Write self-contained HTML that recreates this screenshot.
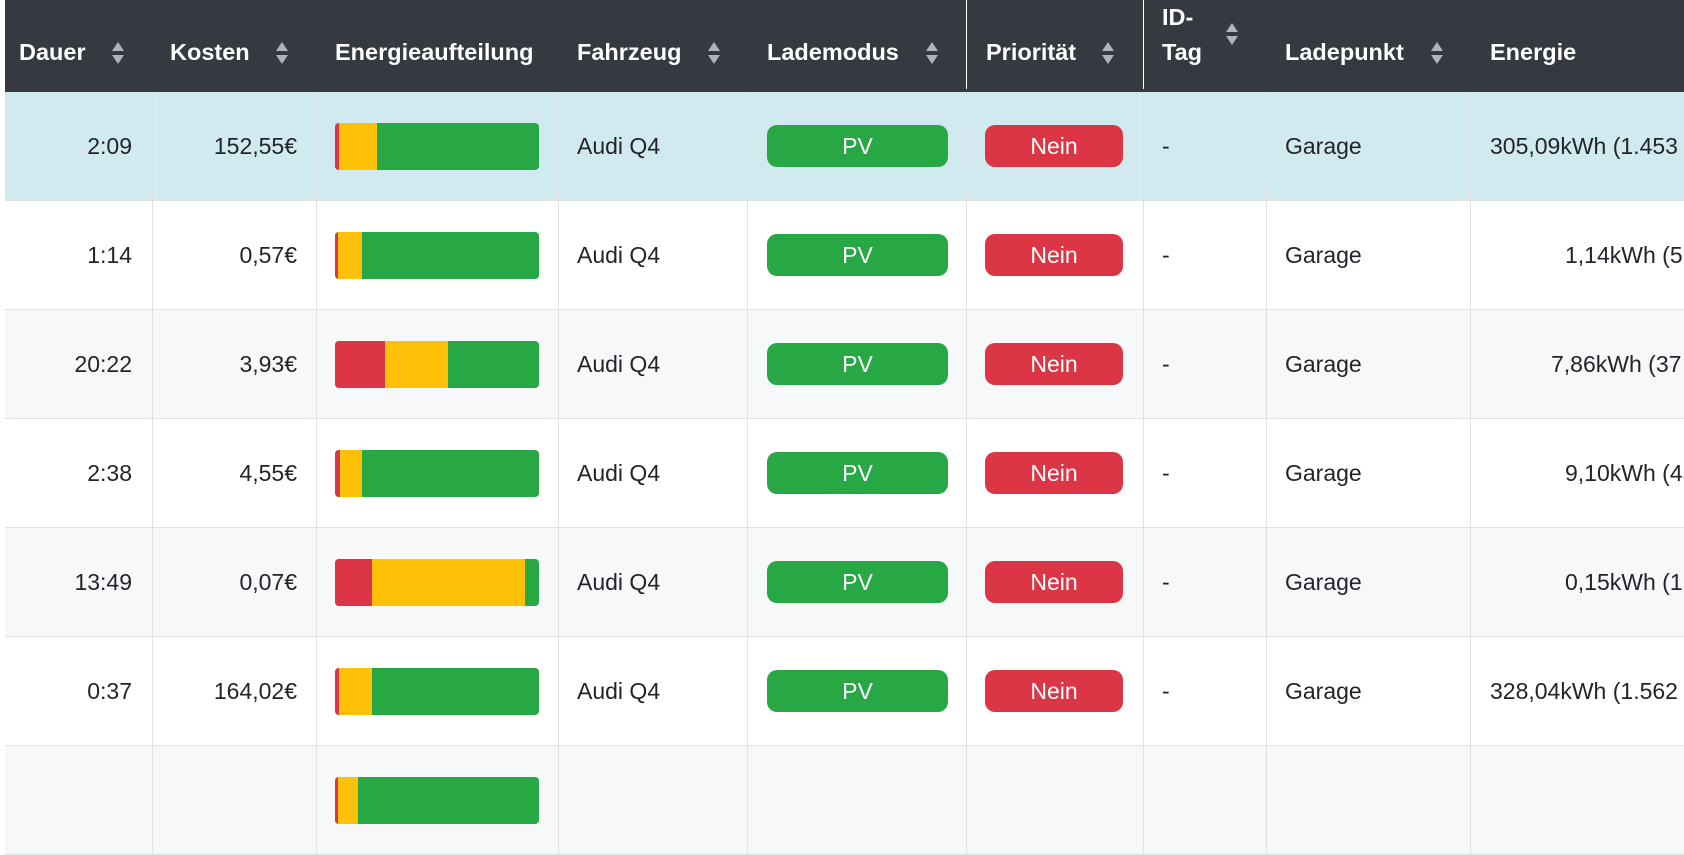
<!DOCTYPE html>
<html><head><meta charset="utf-8"><style>
*{margin:0;padding:0;box-sizing:border-box}
body{width:1684px;height:777px;overflow:hidden;background:#fff;font-family:"Liberation Sans",Arial,sans-serif;position:relative}
.hd{position:absolute;left:5px;top:0;width:1679px;height:92px;background:#343a40;color:#fff;font-weight:bold;font-size:23.5px}
.hd span{position:absolute;top:39px}
.vl{position:absolute;top:0;width:1px;height:89px;background:#fff}
.row{position:absolute;left:5px;width:1679px;height:109px;border-bottom:1px solid #dee2e6;font-size:23px;color:#212529}
.row .c{position:absolute;top:0;height:109px;border-left:1px solid #dee2e6}
.row .t{position:absolute;top:41px;white-space:nowrap}
.bar{position:absolute;left:330px;top:31px;width:204px;height:47px;border-radius:4px;overflow:hidden;display:flex;background:#28a745}
.bar i{display:block;height:100%}
.pv,.nn{position:absolute;top:33px;height:42px;border-radius:10px;color:#fff;text-align:center;line-height:42px;font-size:23px}
.pv{left:762px;width:181px;background:#28a745}
.nn{left:980px;width:138px;background:#dc3545}
</style></head><body>
<div class="hd">
<span style="left:14px">Dauer</span>
<span style="left:165px">Kosten</span>
<span style="left:330px">Energieaufteilung</span>
<span style="left:572px">Fahrzeug</span>
<span style="left:762px">Lademodus</span>
<span style="left:981px">Priorität</span>
<span style="left:1157px;top:4px">ID-</span>
<span style="left:1157px">Tag</span>
<span style="left:1280px">Ladepunkt</span>
<span style="left:1485px">Energie</span>
<div class="vl" style="left:961px"></div><div class="vl" style="left:1138px"></div>
</div>
<svg width="1684" height="92" style="position:absolute;left:0;top:0">
<g fill="#b0b4b8">
<path d="M112 51l6-9 6 9zM112 55l6 9 6-9z"/>
<path d="M276 51l6-9 6 9zM276 55l6 9 6-9z"/>
<path d="M708 51l6-9 6 9zM708 55l6 9 6-9z"/>
<path d="M926 51l6-9 6 9zM926 55l6 9 6-9z"/>
<path d="M1102 51l6-9 6 9zM1102 55l6 9 6-9z"/>
<path d="M1226 32l6-9 6 9zM1226 36l6 9 6-9z"/>
<path d="M1431 51l6-9 6 9zM1431 55l6 9 6-9z"/>
</g></svg>

<div class="row" style="top:92px;background:#d1eaf0">
<div class="c" style="left:147px"></div><div class="c" style="left:311px"></div><div class="c" style="left:553px"></div><div class="c" style="left:742px"></div><div class="c" style="left:961px"></div><div class="c" style="left:1138px"></div><div class="c" style="left:1261px"></div><div class="c" style="left:1465px"></div>
<span class="t" style="right:1552px">2:09</span><span class="t" style="right:1387px">152,55€</span>
<div class="bar"><i style="width:4px;background:#dc3545"></i><i style="width:38px;background:#ffc107"></i></div>
<span class="t" style="left:572px">Audi Q4</span><div class="pv">PV</div><div class="nn">Nein</div>
<span class="t" style="left:1157px">-</span><span class="t" style="left:1280px">Garage</span><span class="t" style="left:1485px">305,09kWh (1.453</span>
</div>

<div class="row" style="top:201px;background:#fff">
<div class="c" style="left:147px"></div><div class="c" style="left:311px"></div><div class="c" style="left:553px"></div><div class="c" style="left:742px"></div><div class="c" style="left:961px"></div><div class="c" style="left:1138px"></div><div class="c" style="left:1261px"></div><div class="c" style="left:1465px"></div>
<span class="t" style="right:1552px">1:14</span><span class="t" style="right:1387px">0,57€</span>
<div class="bar"><i style="width:3px;background:#dc3545"></i><i style="width:24px;background:#ffc107"></i></div>
<span class="t" style="left:572px">Audi Q4</span><div class="pv">PV</div><div class="nn">Nein</div>
<span class="t" style="left:1157px">-</span><span class="t" style="left:1280px">Garage</span><span class="t" style="left:1560px">1,14kWh (5</span>
</div>

<div class="row" style="top:310px;background:#f7f8fa">
<div class="c" style="left:147px"></div><div class="c" style="left:311px"></div><div class="c" style="left:553px"></div><div class="c" style="left:742px"></div><div class="c" style="left:961px"></div><div class="c" style="left:1138px"></div><div class="c" style="left:1261px"></div><div class="c" style="left:1465px"></div>
<span class="t" style="right:1552px">20:22</span><span class="t" style="right:1387px">3,93€</span>
<div class="bar"><i style="width:50px;background:#dc3545"></i><i style="width:63px;background:#ffc107"></i></div>
<span class="t" style="left:572px">Audi Q4</span><div class="pv">PV</div><div class="nn">Nein</div>
<span class="t" style="left:1157px">-</span><span class="t" style="left:1280px">Garage</span><span class="t" style="left:1546px">7,86kWh (37</span>
</div>

<div class="row" style="top:419px;background:#fff">
<div class="c" style="left:147px"></div><div class="c" style="left:311px"></div><div class="c" style="left:553px"></div><div class="c" style="left:742px"></div><div class="c" style="left:961px"></div><div class="c" style="left:1138px"></div><div class="c" style="left:1261px"></div><div class="c" style="left:1465px"></div>
<span class="t" style="right:1552px">2:38</span><span class="t" style="right:1387px">4,55€</span>
<div class="bar"><i style="width:5px;background:#dc3545"></i><i style="width:22px;background:#ffc107"></i></div>
<span class="t" style="left:572px">Audi Q4</span><div class="pv">PV</div><div class="nn">Nein</div>
<span class="t" style="left:1157px">-</span><span class="t" style="left:1280px">Garage</span><span class="t" style="left:1560px">9,10kWh (43</span>
</div>

<div class="row" style="top:528px;background:#f7f8fa">
<div class="c" style="left:147px"></div><div class="c" style="left:311px"></div><div class="c" style="left:553px"></div><div class="c" style="left:742px"></div><div class="c" style="left:961px"></div><div class="c" style="left:1138px"></div><div class="c" style="left:1261px"></div><div class="c" style="left:1465px"></div>
<span class="t" style="right:1552px">13:49</span><span class="t" style="right:1387px">0,07€</span>
<div class="bar"><i style="width:37px;background:#dc3545"></i><i style="width:153px;background:#ffc107"></i></div>
<span class="t" style="left:572px">Audi Q4</span><div class="pv">PV</div><div class="nn">Nein</div>
<span class="t" style="left:1157px">-</span><span class="t" style="left:1280px">Garage</span><span class="t" style="left:1560px">0,15kWh (1</span>
</div>

<div class="row" style="top:637px;background:#fff">
<div class="c" style="left:147px"></div><div class="c" style="left:311px"></div><div class="c" style="left:553px"></div><div class="c" style="left:742px"></div><div class="c" style="left:961px"></div><div class="c" style="left:1138px"></div><div class="c" style="left:1261px"></div><div class="c" style="left:1465px"></div>
<span class="t" style="right:1552px">0:37</span><span class="t" style="right:1387px">164,02€</span>
<div class="bar"><i style="width:4px;background:#dc3545"></i><i style="width:33px;background:#ffc107"></i></div>
<span class="t" style="left:572px">Audi Q4</span><div class="pv">PV</div><div class="nn">Nein</div>
<span class="t" style="left:1157px">-</span><span class="t" style="left:1280px">Garage</span><span class="t" style="left:1485px">328,04kWh (1.562</span>
</div>

<div class="row" style="top:746px;background:#f7f8fa">
<div class="c" style="left:147px"></div><div class="c" style="left:311px"></div><div class="c" style="left:553px"></div><div class="c" style="left:742px"></div><div class="c" style="left:961px"></div><div class="c" style="left:1138px"></div><div class="c" style="left:1261px"></div><div class="c" style="left:1465px"></div>
<div class="bar"><i style="width:3px;background:#dc3545"></i><i style="width:20px;background:#ffc107"></i></div>
</div>
</body></html>
